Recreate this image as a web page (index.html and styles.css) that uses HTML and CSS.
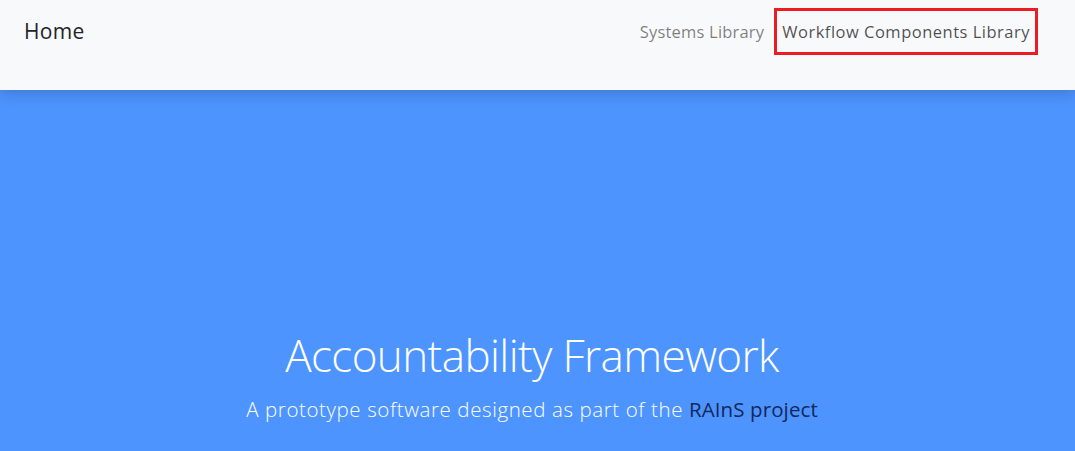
FILE: index.html
```html
<!DOCTYPE html>
<html>
<head>
<meta charset="utf-8">
<link rel="stylesheet" href="styles.css">
</head>
<body>
<nav class="navbar">
  <a class="brand" href="#">Home</a>
  <div class="nav-links">
    <a class="nav-link muted" href="#">Systems Library</a>
    <a class="nav-link active" href="#">Workflow Components Library</a>
  </div>
</nav>
<header class="hero">
  <h1 class="hero-title">Accountability Framework</h1>
  <p class="hero-sub">A prototype software designed as part of the <a class="hero-link" href="#">RAInS project</a></p>
</header>
</body>
</html>
```
FILE: styles.css
```css
html, body {
  margin: 0;
  padding: 0;
  height: 100%;
  overflow: hidden;
}
body {
  font-family: "Open Sans", "Noto Sans", sans-serif;
  background: #4d94ff;
}
a { text-decoration: none; }
.navbar {
  position: relative;
  z-index: 2;
  height: 90px;
  box-sizing: border-box;
  background: #f8f9fa;
  display: flex;
  justify-content: space-between;
  align-items: flex-start;
  padding: 8px 37px 0 24px;
  box-shadow: 0 4px 14px rgba(0, 0, 0, 0.18);
}
.brand {
  color: #212529;
  font-size: 21px;
  line-height: 47px;
  letter-spacing: 0.3px;
}
.nav-links {
  display: flex;
  align-items: center;
  gap: 2px;
}
.nav-link {
  color: rgba(0, 0, 0, 0.5);
  font-size: 16.5px;
  letter-spacing: 0.5px;
  line-height: 41px;
  padding: 0 5px;
  border: 3px solid transparent;
}
.nav-link.muted {
  letter-spacing: 0.2px;
}
.nav-link.active {
  color: rgba(0, 0, 0, 0.7);
  border-color: #ed1c24;
}
.hero {
  background: #4d94ff;
  text-align: center;
  color: #fff;
  padding: 236px 11px 0 0;
}
.hero-title {
  margin: 0;
  font-weight: 300;
  font-size: 44px;
  letter-spacing: -0.6px;
  line-height: 58px;
}
.hero-sub {
  margin: 10px 0 0;
  font-weight: 300;
  font-size: 20.5px;
  letter-spacing: 0.6px;
  line-height: 30px;
}
.hero-link {
  color: #13275a;
  font-weight: 400;
  letter-spacing: 0.1px;
}
```
